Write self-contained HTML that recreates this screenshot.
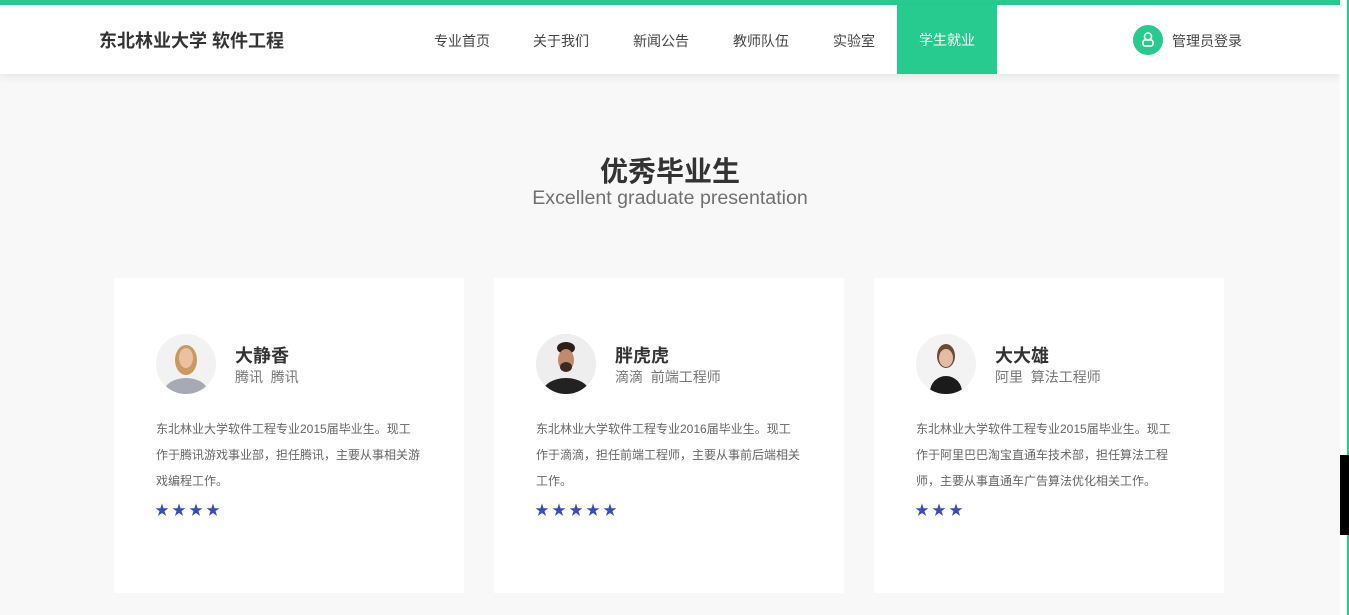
<!DOCTYPE html>
<html><head><meta charset="utf-8"><style>
*{margin:0;padding:0;box-sizing:border-box}
body{width:1349px;height:615px;overflow:hidden;background:#f8f8f8;font-family:"Liberation Sans","Noto Sans CJK SC",sans-serif;position:relative}
.top{position:absolute;left:0;top:0;width:1340px;height:5px;background:#27cb8f}
.hdr{position:absolute;left:0;top:5px;width:1340px;height:69px;background:#fff;box-shadow:0 3px 8px rgba(0,0,0,.08)}
.logo{position:absolute;left:99px;top:22px;font-size:18px;font-weight:bold;color:#333}
.nav a{position:absolute;top:26px;font-size:14px;color:#444;text-decoration:none}
.act{position:absolute;left:897px;top:0;width:100px;height:69px;background:#27cb8f;color:#fff;font-size:14px;line-height:70px;text-align:center}
.ic{position:absolute;left:1133px;top:20px;width:30px;height:30px;border-radius:50%;background:#27cb8f}
.login{position:absolute;left:1172px;top:26px;font-size:14px;color:#444}
.sb{position:absolute;left:1340px;top:0;width:9px;height:615px;background:#fff;border-right:2px solid #27cb8f}
.thumb{position:absolute;left:1340px;top:455px;width:9px;height:80px;background:#000}
h2{position:absolute;top:150px;width:1340px;text-align:center;font-size:28px;color:#333}
.sub{position:absolute;top:187px;width:1340px;text-align:center;font-size:19.6px;color:#707070}
.card{position:absolute;top:278px;width:350px;height:315px;background:#fff}
.av{position:absolute;left:42px;top:56px;width:60px;height:60px;border-radius:50%;background:#eee;overflow:hidden}
.nm{position:absolute;left:121px;top:64px;font-size:18px;font-weight:bold;color:#333}
.co{position:absolute;left:121px;top:89px;font-size:14px;color:#777}
.ds{position:absolute;left:42px;top:138px;width:265px;font-size:12px;line-height:26px;color:#666}
.st{position:absolute;left:41px;top:222px;color:#3b4cb8;font-size:14px;letter-spacing:3px}
</style></head><body>
<div class="top"></div>
<div class="hdr">
<div class="logo">东北林业大学 软件工程</div>
<div class="nav"><a style="left:434px">专业首页</a><a style="left:533px">关于我们</a><a style="left:633px">新闻公告</a><a style="left:733px">教师队伍</a><a style="left:833px">实验室</a></div>
<div class="act">学生就业</div>
<div class="ic"><svg width="30" height="30" viewBox="0 0 30 30" fill="none" stroke="#fff" stroke-width="1.6"><circle cx="15" cy="11.5" r="3.5"/><rect x="10" y="15" width="10" height="6" rx="2"/></svg></div>
<div class="login">管理员登录</div>
</div>
<div class="sb"></div><div class="thumb"></div>
<h2>优秀毕业生</h2>
<div class="sub">Excellent graduate presentation</div>
<div class="card" style="left:114px"><div class="av"><svg width="60" height="60"><rect width="60" height="60" fill="#f2f2f2"/><ellipse cx="30" cy="26" rx="11" ry="15" fill="#c99a60"/><ellipse cx="30" cy="24" rx="7" ry="10" fill="#e9c2a6"/><ellipse cx="30" cy="58" rx="22" ry="14" fill="#a6aab5"/></svg></div><div class="nm">大静香</div><div class="co">腾讯&nbsp; 腾讯</div><div class="ds">东北林业大学软件工程专业2015届毕业生。现工作于腾讯游戏事业部，担任腾讯，主要从事相关游戏编程工作。</div><div class="st">★★★★</div></div>
<div class="card" style="left:494px"><div class="av"><svg width="60" height="60"><rect width="60" height="60" fill="#eee"/><ellipse cx="30" cy="14" rx="9" ry="6" fill="#2b1f1a"/><ellipse cx="30" cy="26" rx="8" ry="11" fill="#c08a6c"/><ellipse cx="30" cy="33" rx="6" ry="5" fill="#3a2a22"/><ellipse cx="30" cy="60" rx="24" ry="16" fill="#222"/></svg></div><div class="nm">胖虎虎</div><div class="co">滴滴&nbsp; 前端工程师</div><div class="ds">东北林业大学软件工程专业2016届毕业生。现工作于滴滴，担任前端工程师，主要从事前后端相关工作。</div><div class="st">★★★★★</div></div>
<div class="card" style="left:874px"><div class="av"><svg width="60" height="60"><rect width="60" height="60" fill="#f3f3f3"/><ellipse cx="30" cy="22" rx="9" ry="12" fill="#6b4a38"/><ellipse cx="30" cy="24" rx="7" ry="9" fill="#e4bca6"/><ellipse cx="30" cy="58" rx="16" ry="16" fill="#1b1b1b"/></svg></div><div class="nm">大大雄</div><div class="co">阿里&nbsp; 算法工程师</div><div class="ds">东北林业大学软件工程专业2015届毕业生。现工作于阿里巴巴淘宝直通车技术部，担任算法工程师，主要从事直通车广告算法优化相关工作。</div><div class="st">★★★</div></div>
</body></html>
